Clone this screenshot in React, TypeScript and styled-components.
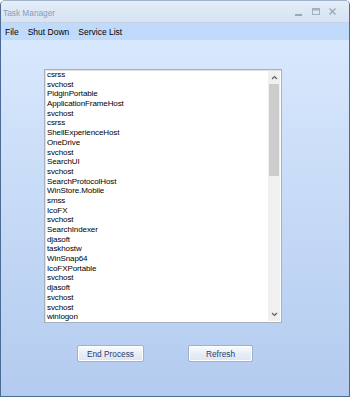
import React from 'react';
import styled, { createGlobalStyle } from 'styled-components';

const processes = [
  'csrss',
  'svchost',
  'PidginPortable',
  'ApplicationFrameHost',
  'svchost',
  'csrss',
  'ShellExperienceHost',
  'OneDrive',
  'svchost',
  'SearchUI',
  'svchost',
  'SearchProtocolHost',
  'WinStore.Mobile',
  'smss',
  'IcoFX',
  'svchost',
  'SearchIndexer',
  'djasoft',
  'taskhostw',
  'WinSnap64',
  'IcoFXPortable',
  'svchost',
  'djasoft',
  'svchost',
  'svchost',
  'winlogon',
];

const GlobalStyle = createGlobalStyle`
  html, body {
    margin: 0;
    padding: 0;
    background: #ffffff;
  }

  body {
    font-family: 'Liberation Sans', Arial, sans-serif;
  }
`;

const StyledWindow = styled.div`
  width: 350px;
  height: 397px;
  box-sizing: border-box;
  display: flex;
  flex-direction: column;
  border: 1px solid #4a6b94;
  border-top-color: #9fb3cc;
  border-top-left-radius: 5px;
  border-top-right-radius: 5px;
  overflow: hidden;
`;

const StyledTitleBar = styled.div`
  height: 21px;
  flex: none;
  display: flex;
  align-items: center;
  padding: 0 0 0 2px;
  background: linear-gradient(#e4edf8, #d6e3f4);
  border-bottom: 1px solid #c5d3e4;

  .title {
    flex: 1;
    font-size: 8.3px;
    color: #8b9cb3;
    margin-top: 3px;
  }

  .controls {
    display: flex;
    align-items: center;
    gap: 0;
    margin-right: 10px;
  }
`;

const StyledControl = styled.span<{ $w: number }>`
  width: ${(p) => p.$w}px;
  height: 14px;
  display: flex;
  align-items: center;
  justify-content: center;
`;

const StyledMenuBar = styled.div`
  height: 17px;
  flex: none;
  display: flex;
  align-items: center;
  gap: 9px;
  padding-left: 4px;
  background: #c0dafb;
  font-size: 8.5px;
  color: #000;

  .item {
    white-space: nowrap;
  }
`;

const StyledBody = styled.div`
  flex: 1;
  display: flex;
  flex-direction: column;
  background: linear-gradient(#d8e8fd, #b3cbef);
  padding: 29px 0 0 43px;
`;

const StyledListBox = styled.div`
  width: 238px;
  height: 254px;
  box-sizing: border-box;
  display: flex;
  background: #fff;
  border: 1px solid #a8b0bb;
  box-shadow: inset 1px 1px 0 #e2e2e2;

  .items {
    flex: 1;
    margin: 0;
    padding: 0 0 0 2px;
    list-style: none;
    overflow: hidden;
  }
`;

const StyledItem = styled.li`
  height: 9.7px;
  line-height: 9.7px;
  font-size: 8px;
  letter-spacing: -0.1px;
  color: #000;
  white-space: nowrap;
`;

const StyledScrollBar = styled.div`
  width: 12px;
  flex: none;
  display: flex;
  flex-direction: column;
  background: #f0f0f0;
  margin: 1px 1px 1px 0;

  .arrow {
    height: 13px;
    flex: none;
    display: flex;
    align-items: center;
    justify-content: center;
  }

  .track {
    flex: 1;
  }

  .thumb {
    height: 92px;
    margin: 0 1px;
    background: #cdcdcd;
  }
`;

const StyledButtonRow = styled.div`
  display: flex;
  gap: 44px;
  margin: 22px 0 0 33px;
`;

const StyledButton = styled.button<{ $w: number }>`
  width: ${(p) => p.$w}px;
  height: 17px;
  padding: 0;
  box-sizing: border-box;
  font-family: 'Liberation Sans', Arial, sans-serif;
  font-size: 8.3px;
  color: #1f3d6f;
  background: linear-gradient(#fbfcfe, #e6edf7 55%, #dbe5f3);
  border: 1px solid #9db1cd;
  border-radius: 2px;
  box-shadow: inset 0 0 0 1px #ffffff;
`;

const Chevron: React.FC<{ up?: boolean }> = ({ up }) => (
  <svg width="7" height="5" viewBox="0 0 7 5">
    <polyline
      points={up ? '1,4 3.5,1.5 6,4' : '1,1 3.5,3.5 6,1'}
      fill="none"
      stroke="#606060"
      strokeWidth="1.2"
    />
  </svg>
);

const App: React.FC = () => {
  return (
    <>
      <GlobalStyle />
      <StyledWindow>
        <StyledTitleBar>
          <span className="title">Task Manager</span>
          <div className="controls">
            <StyledControl $w={18}>
              <svg width="7" height="8" viewBox="0 0 7 8">
                <rect x="0" y="6" width="7" height="2" fill="#9aa7b8" />
              </svg>
            </StyledControl>
            <StyledControl $w={18}>
              <svg width="8" height="7" viewBox="0 0 8 7">
                <rect x="0.5" y="0.5" width="7" height="6" fill="none" stroke="#a3afbf" />
                <rect x="0.5" y="0.5" width="7" height="2" fill="#a3afbf" />
              </svg>
            </StyledControl>
            <StyledControl $w={14}>
              <svg width="7" height="7" viewBox="0 0 7 7">
                <path d="M0.5 0.5 L6.5 6.5 M6.5 0.5 L0.5 6.5" stroke="#9aa7b8" strokeWidth="1.4" />
              </svg>
            </StyledControl>
          </div>
        </StyledTitleBar>
        <StyledMenuBar>
          <span className="item">File</span>
          <span className="item">Shut Down</span>
          <span className="item">Service List</span>
        </StyledMenuBar>
        <StyledBody>
          <StyledListBox>
            <ul className="items">
              {processes.map((name, i) => (
                <StyledItem key={i}>{name}</StyledItem>
              ))}
            </ul>
            <StyledScrollBar>
              <div className="arrow">
                <Chevron up />
              </div>
              <div className="track">
                <div className="thumb" />
              </div>
              <div className="arrow">
                <Chevron />
              </div>
            </StyledScrollBar>
          </StyledListBox>
          <StyledButtonRow>
            <StyledButton $w={67}>End Process</StyledButton>
            <StyledButton $w={65}>Refresh</StyledButton>
          </StyledButtonRow>
        </StyledBody>
      </StyledWindow>
    </>
  );
};

export default App;
